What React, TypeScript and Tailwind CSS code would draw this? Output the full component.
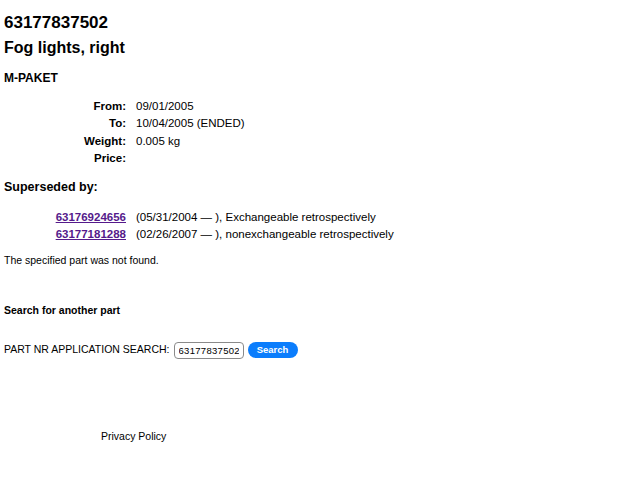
import { FC } from "react";

const details = [
  { label: "From:", value: "09/01/2005" },
  { label: "To:", value: "10/04/2005 (ENDED)" },
  { label: "Weight:", value: "0.005 kg" },
  { label: "Price:", value: "" },
];

const superseded = [
  { part: "63176924656", note: "(05/31/2004 \u2014 ), Exchangeable retrospectively" },
  { part: "63177181288", note: "(02/26/2007 \u2014 ), nonexchangeable retrospectively" },
];

const App: FC = () => {
  return (
    <div className="min-h-[480px] bg-white px-[4px] text-black font-['Liberation_Sans',Arial,sans-serif]">
      <h1 className="pt-[13px] text-[17px] font-bold leading-[20px]">63177837502</h1>
      <h2 className="mt-[5px] text-[16px] font-bold leading-[20px]">Fog lights, right</h2>
      <h3 className="mt-[12px] text-[12px] font-bold leading-[16px]">M-PAKET</h3>

      <div className="mt-[12px] grid grid-cols-[122px_auto] gap-x-[10px] text-[11.5px] leading-[17.3px]">
        {details.map((row) => (
          <div key={row.label} className="contents">
            <span className="text-right font-bold">{row.label}</span>
            <span>{row.value}</span>
          </div>
        ))}
      </div>

      <h3 className="mt-[12px] text-[12.5px] font-bold leading-[16px]">Superseded by:</h3>

      <div className="mt-[14px] grid grid-cols-[122px_auto] gap-x-[10px] text-[11.5px] leading-[17px]">
        {superseded.map((row) => (
          <div key={row.part} className="contents">
            <a href="#" className="text-right font-bold text-[#551a8b] underline">
              {row.part}
            </a>
            <span>{row.note}</span>
          </div>
        ))}
      </div>

      <p className="mt-[10px] text-[10.5px] leading-[14px]">The specified part was not found.</p>

      <h4 className="mt-[36px] text-[10.5px] font-bold leading-[14px]">Search for another part</h4>

      <div className="mt-[24px] flex h-[18px] items-center text-[10.5px]">
        <span>PART NR APPLICATION SEARCH:</span>
        <input
          readOnly
          value="63177837502"
          className="ml-[4px] h-[17px] w-[70px] rounded-[4px] border border-[#8a8a8a] px-[4px] text-[9.5px] tracking-[0.3px] text-black outline-none"
        />
        <button className="ml-[4px] h-[16px] w-[50px] rounded-full bg-[#0b7dfc] text-[9.5px] font-bold leading-[16px] text-white">
          Search
        </button>
      </div>

      <p className="mt-[70px] pl-[97px] text-[10.5px] leading-[14px]">Privacy Policy</p>
    </div>
  );
};

export default App;
